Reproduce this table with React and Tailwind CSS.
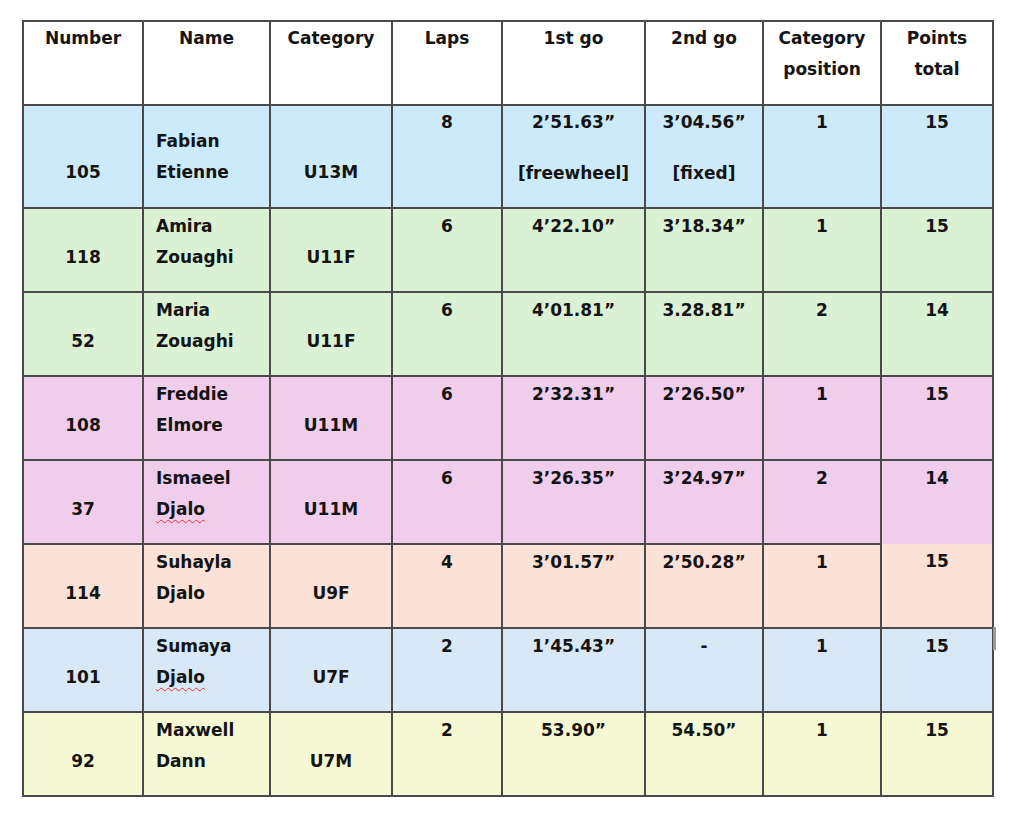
import React from 'react';

// Race results sheet - colour banded by category
const rows = [
  { num: '105', first: 'Fabian', last: 'Etienne', cat: 'U13M', laps: '8', go1: ['2’51.63”', '[freewheel]'], go2: ['3’04.56”', '[fixed]'], pos: '1', pts: '15', bg: 'bg-[#cdeafb]', tall: true },
  { num: '118', first: 'Amira', last: 'Zouaghi', cat: 'U11F', laps: '6', go1: ['4’22.10”'], go2: ['3’18.34”'], pos: '1', pts: '15', bg: 'bg-[#daf2d3]' },
  { num: '52', first: 'Maria', last: 'Zouaghi', cat: 'U11F', laps: '6', go1: ['4’01.81”'], go2: ['3.28.81”'], pos: '2', pts: '14', bg: 'bg-[#daf2d3]' },
  { num: '108', first: 'Freddie', last: 'Elmore', cat: 'U11M', laps: '6', go1: ['2’32.31”'], go2: ['2’26.50”'], pos: '1', pts: '15', bg: 'bg-[#f1cdec]' },
  { num: '37', first: 'Ismaeel', last: 'Djalo', wavy: true, cat: 'U11M', laps: '6', go1: ['3’26.35”'], go2: ['3’24.97”'], pos: '2', pts: '14', bg: 'bg-[#f1cdec]', openPts: true },
  { num: '114', first: 'Suhayla', last: 'Djalo', cat: 'U9F', laps: '4', go1: ['3’01.57”'], go2: ['2’50.28”'], pos: '1', pts: '15', bg: 'bg-[#fce2d6]' },
  { num: '101', first: 'Sumaya', last: 'Djalo', wavy: true, cat: 'U7F', laps: '2', go1: ['1’45.43”'], go2: ['-'], pos: '1', pts: '15', bg: 'bg-[#d9e8f7]' },
  { num: '92', first: 'Maxwell', last: 'Dann', cat: 'U7M', laps: '2', go1: ['53.90”'], go2: ['54.50”'], pos: '1', pts: '15', bg: 'bg-[#f6fad4]' },
];

const cell = 'border-2 border-[#4a4a4a] p-0 align-top';

function Times({ lines, tall }) {
  return (
    <div className={`text-center ${tall ? 'pt-[1px]' : 'pt-[2px]'}`}>
      <div>{lines[0]}</div>
      {lines[1] && <div className="mt-[20px]">{lines[1]}</div>}
    </div>
  );
}

export default function App() {
  return (
    <div className="min-h-screen bg-white pt-[20px] pl-[22px]">
      <div className="relative w-[970px]">
        <table className="w-[970px] table-fixed border-collapse font-['DejaVu_Sans',sans-serif] text-[17px] font-bold leading-[31px] text-[#141414]">
          <colgroup>
            <col className="w-[120px]" />
            <col className="w-[127px]" />
            <col className="w-[122px]" />
            <col className="w-[110px]" />
            <col className="w-[143px]" />
            <col className="w-[118px]" />
            <col className="w-[118px]" />
            <col className="w-[112px]" />
          </colgroup>
          <thead>
            <tr className="h-[84px] bg-white">
              {[['Number'], ['Name'], ['Category'], ['Laps'], ['1st go'], ['2nd go'], ['Category', 'position'], ['Points', 'total']].map((h, i) => (
                <th key={i} className={`${cell} font-bold`}>
                  <div className="pt-[1px] text-center">
                    {h.map((l) => (
                      <div key={l}>{l}</div>
                    ))}
                  </div>
                </th>
              ))}
            </tr>
          </thead>
          <tbody>
            {rows.map((r) => (
              <tr key={r.num} className={`${r.tall ? 'h-[103px]' : 'h-[84px]'} ${r.bg}`}>
                <td className={cell}>
                  <div className={`text-center ${r.tall ? 'pt-[51px]' : 'pt-[33px]'}`}>{r.num}</div>
                </td>
                <td className={cell}>
                  <div className={`pl-[12px] ${r.tall ? 'pt-[20px]' : 'pt-[2px]'}`}>
                    <div>{r.first}</div>
                    <div>
                      <span className={r.wavy ? 'underline decoration-wavy decoration-[#d33] decoration-1 underline-offset-[4px]' : ''}>
                        {r.last}
                      </span>
                    </div>
                  </div>
                </td>
                <td className={cell}>
                  <div className={`text-center ${r.tall ? 'pt-[51px]' : 'pt-[33px]'}`}>{r.cat}</div>
                </td>
                <td className={cell}>
                  <div className={`text-center ${r.tall ? 'pt-[1px]' : 'pt-[2px]'}`}>{r.laps}</div>
                </td>
                <td className={cell}>
                  <Times lines={r.go1} tall={r.tall} />
                </td>
                <td className={cell}>
                  <Times lines={r.go2} tall={r.tall} />
                </td>
                <td className={cell}>
                  <div className={`text-center ${r.tall ? 'pt-[1px]' : 'pt-[2px]'}`}>{r.pos}</div>
                </td>
                <td className={`${cell} ${r.openPts ? '[border-bottom-style:hidden]' : ''}`}>
                  <div className={`text-center ${r.tall ? 'pt-[1px]' : 'pt-[2px]'}`}>{r.pts}</div>
                </td>
              </tr>
            ))}
          </tbody>
        </table>
        {/* small scanner tick on the right edge */}
        <span className="absolute left-[971px] top-[607px] h-[23px] w-[3px] bg-[#9a9a9a]" />
      </div>
    </div>
  );
}
